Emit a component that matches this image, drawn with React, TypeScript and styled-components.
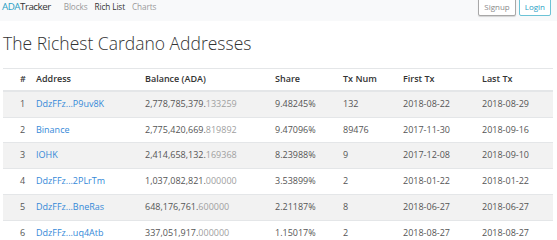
import React, { FunctionComponent } from 'react';
import styled, { createGlobalStyle } from 'styled-components';

const GlobalStyle = createGlobalStyle`
  html, body {
    margin: 0;
    padding: 0;
    background: #ffffff;
    overflow: hidden;
  }
  body {
    font-family: 'Open Sans', 'Liberation Sans', sans-serif;
    font-size: 9px;
    line-height: 12.75px;
    color: #555555;
  }
`;

const Page = styled.div`
  margin-top: -5px;
`;

const Navbar = styled.nav`
  display: flex;
  align-items: center;
  height: 25.5px;
  padding: 0 6px 0 2px;
  background: #f8f9fa;
`;

const Brand = styled.span`
  font-size: 9.8px;
  color: #333333;
  margin-right: 13px;
  letter-spacing: -0.5px;
`;

const BrandAccent = styled.span`
  color: #2aa0c4;
`;

const NavLinks = styled.div`
  display: flex;
  gap: 7px;
  flex: 1;
`;

const NavLink = styled.span<{ active?: boolean }>`
  font-size: 8.2px;
  letter-spacing: -0.1px;
  color: ${(props) => (props.active ? '#333333' : '#9a9a9a')};
`;

const Actions = styled.div`
  display: flex;
  gap: 3px;
  margin-top: -3px;
`;

const OutlineButton = styled.button<{ tone: 'secondary' | 'info' }>`
  height: 20px;
  padding: 0 5px;
  font-family: inherit;
  font-size: 8px;
  background: #ffffff;
  border-radius: 2px;
  border: 1px solid ${(props) => (props.tone === 'info' ? '#6cc3d6' : '#a8a8a8')};
  color: ${(props) => (props.tone === 'info' ? '#2aa0c4' : '#8a8a8a')};
  box-shadow: ${(props) =>
    props.tone === 'info' ? 'none' : '0 1px 1px rgba(0,0,0,0.15)'};
`;

const Content = styled.main`
  padding: 0 4px 0 3px;
`;

const Title = styled.h2`
  margin: 12.5px 0 15px;
  font-size: 17.5px;
  line-height: 20px;
  font-weight: 300;
  color: #333333;
`;

const Table = styled.table`
  width: 100%;
  table-layout: fixed;
  border-collapse: collapse;
`;

const HeadCell = styled.th<{ first?: boolean }>`
  text-align: left;
  font-weight: 600;
  color: #333333;
  padding: 4px 0 4px ${(props) => (props.first ? '17px' : '6px')};
  border-top: 1px solid #e4e6e8;
  border-bottom: 2px solid #e4e6e8;
  white-space: nowrap;
`;

const Row = styled.tr`
  &:nth-child(odd) {
    background: #f2f2f2;
  }
`;

const Cell = styled.td<{ first?: boolean }>`
  padding: 6px 0 6px ${(props) => (props.first ? '17px' : '6px')};
  border-top: 1px solid #e4e6e8;
  white-space: nowrap;
  overflow: hidden;
`;

const AddressLink = styled.a`
  color: #3589d8;
  text-decoration: none;
`;

const Decimals = styled.span`
  color: #a0a0a0;
`;

interface Holder {
  address: string;
  whole: string;
  decimals: string;
  share: string;
  txNum: string;
  firstTx: string;
  lastTx: string;
}

const holders: Holder[] = [
  { address: 'DdzFFz...P9uv8K', whole: '2,778,785,379', decimals: '133259', share: '9.48245%', txNum: '132', firstTx: '2018-08-22', lastTx: '2018-08-29' },
  { address: 'Binance', whole: '2,775,420,669', decimals: '819892', share: '9.47096%', txNum: '89476', firstTx: '2017-11-30', lastTx: '2018-09-16' },
  { address: 'IOHK', whole: '2,414,658,132', decimals: '169368', share: '8.23988%', txNum: '9', firstTx: '2017-12-08', lastTx: '2018-09-10' },
  { address: 'DdzFFz...2PLrTm', whole: '1,037,082,821', decimals: '000000', share: '3.53899%', txNum: '2', firstTx: '2018-01-22', lastTx: '2018-01-22' },
  { address: 'DdzFFz...BneRas', whole: '648,176,761', decimals: '600000', share: '2.21187%', txNum: '8', firstTx: '2018-06-27', lastTx: '2018-06-27' },
  { address: 'DdzFFz...uq4Atb', whole: '337,051,917', decimals: '000000', share: '1.15017%', txNum: '2', firstTx: '2018-08-27', lastTx: '2018-08-27' },
];

const columns = [
  { label: '#', width: 27 },
  { label: 'Address', width: 109 },
  { label: 'Balance (ADA)', width: 130 },
  { label: 'Share', width: 68 },
  { label: 'Tx Num', width: 60 },
  { label: 'First Tx', width: 79 },
  { label: 'Last Tx', width: 77 },
];

export const RichList: FunctionComponent = () => (
  <Table>
    <colgroup>
      {columns.map((c) => (
        <col key={c.label} style={{ width: c.width }} />
      ))}
    </colgroup>
    <thead>
      <tr>
        {columns.map((c, i) => (
          <HeadCell key={c.label} first={i === 0}>
            {c.label}
          </HeadCell>
        ))}
      </tr>
    </thead>
    <tbody>
      {holders.map((h, i) => (
        <Row key={h.address}>
          <Cell first>{i + 1}</Cell>
          <Cell>
            <AddressLink href="#">{h.address}</AddressLink>
          </Cell>
          <Cell>
            {h.whole}.<Decimals>{h.decimals}</Decimals>
          </Cell>
          <Cell>{h.share}</Cell>
          <Cell>{h.txNum}</Cell>
          <Cell>{h.firstTx}</Cell>
          <Cell>{h.lastTx}</Cell>
        </Row>
      ))}
    </tbody>
  </Table>
);

export default function App() {
  return (
    <Page>
      <GlobalStyle />
      <Navbar>
        <Brand>
          <BrandAccent>ADA</BrandAccent>Tracker
        </Brand>
        <NavLinks>
          <NavLink>Blocks</NavLink>
          <NavLink active>Rich List</NavLink>
          <NavLink>Charts</NavLink>
        </NavLinks>
        <Actions>
          <OutlineButton tone="secondary">Signup</OutlineButton>
          <OutlineButton tone="info">Login</OutlineButton>
        </Actions>
      </Navbar>
      <Content>
        <Title>The Richest Cardano Addresses</Title>
        <RichList />
      </Content>
    </Page>
  );
}
